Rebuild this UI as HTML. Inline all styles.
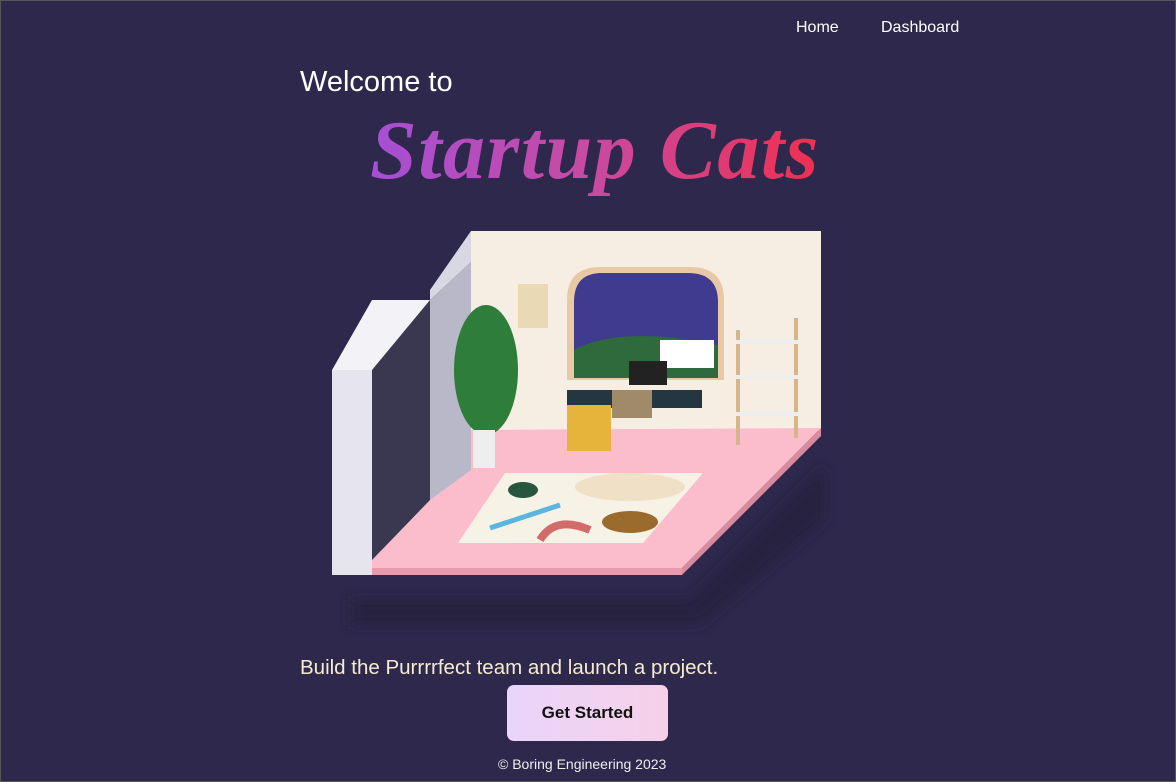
<!DOCTYPE html>
<html><head><style>
html,body{margin:0;padding:0}
body{width:1176px;height:782px;background:#2e284c;font-family:"Liberation Sans",sans-serif;position:relative;overflow:hidden;box-shadow:inset 0 0 0 1px #555}
.nav{position:absolute;top:19px;font-size:16px;color:#fff}
.w{position:absolute;left:300px;top:66px;font-size:29px;color:#fff}
.logo{position:absolute;left:370px;top:102px;font-family:"Liberation Serif",serif;font-style:italic;font-size:84px;font-weight:bold;background:linear-gradient(90deg,#a64fd6,#c94aa0 50%,#ef2f4f);-webkit-background-clip:text;background-clip:text;color:transparent;letter-spacing:1.5px}
.tag{position:absolute;left:300px;top:656px;font-size:20.5px;color:#f6eccf}
.btn{position:absolute;left:507px;top:685px;width:161px;height:56px;border-radius:7px;background:linear-gradient(90deg,#ead5fb,#f6d0e8);color:#111;font-size:17px;font-weight:bold;text-align:center;line-height:56px}
.ft{position:absolute;left:498px;top:756px;font-size:14px;color:#eee}
</style></head><body>
<div class="nav" style="left:796px">Home</div>
<div class="nav" style="left:881px">Dashboard</div>
<div class="w">Welcome to</div>
<div class="logo">Startup Cats</div>
<svg style="position:absolute;left:0;top:0" width="1176" height="782">
<defs><filter id="b"><feGaussianBlur stdDeviation="6"/></filter></defs>
<polygon points="350,600 690,600 825,465 825,520 700,625 350,625" fill="#272040" filter="url(#b)"/>
<rect x="471" y="231" width="350" height="200" fill="#f6ede3"/>
<polygon points="471,430 821,428 682,568 332,568" fill="#fbbccb"/>
<polygon points="332,568 682,568 682,575 332,575" fill="#e79aac"/>
<polygon points="682,568 821,428 821,436 682,575" fill="#d98a9c"/>
<polygon points="430,300 471,262 471,470 430,500" fill="#b9b8c8"/>
<polygon points="372,300 430,300 430,500 372,560" fill="#3a3850"/>
<polygon points="332,370 372,300 430,300 372,370" fill="#f3f2f7"/>
<rect x="332" y="370" width="40" height="205" fill="#e6e4ec"/>
<polygon points="430,300 471,262 471,231 430,290" fill="#d8d8e4"/>
<path d="M567,380 V300 Q567,267 600,267 H690 Q724,267 724,300 V380 Z" fill="#e9c8a6"/>
<path d="M574,378 V302 Q574,273 602,273 H688 Q718,273 718,302 V378 Z" fill="#3f3b8e"/>
<path d="M574,378 L574,350 Q620,325 718,345 V378 Z" fill="#2f6a3c"/>
<rect x="660" y="340" width="54" height="28" fill="#fff"/>
<rect x="518" y="284" width="30" height="44" fill="#e9d9b5"/>
<rect x="567" y="390" width="135" height="18" fill="#243642"/>
<rect x="567" y="405" width="44" height="46" fill="#e6b43a"/>
<rect x="629" y="361" width="38" height="24" fill="#222"/>
<rect x="612" y="390" width="40" height="28" fill="#a08a6a"/>
<rect x="736" y="330" width="4" height="115" fill="#d4b68a"/><rect x="794" y="318" width="4" height="120" fill="#d4b68a"/>
<rect x="736" y="340" width="62" height="4" fill="#eee"/><rect x="736" y="375" width="62" height="4" fill="#eee"/><rect x="736" y="412" width="62" height="4" fill="#eee"/>
<ellipse cx="486" cy="370" rx="32" ry="65" fill="#2f7d3a"/>
<rect x="473" y="430" width="22" height="38" fill="#eee"/>
<polygon points="505,473 703,473 643,543 458,543" fill="#f7f2e6"/>
<ellipse cx="630" cy="487" rx="55" ry="14" fill="#f0e0c5"/>
<ellipse cx="630" cy="522" rx="28" ry="11" fill="#9a6b2d"/>
<ellipse cx="523" cy="490" rx="15" ry="8" fill="#28553d"/>
<path d="M540,540 Q555,515 590,530" stroke="#d46b6b" stroke-width="8" fill="none"/>
<path d="M490,528 L560,505" stroke="#5cb5dc" stroke-width="5"/>
</svg>
<div class="tag">Build the Purrrrfect team and launch a project.</div>
<div class="btn">Get Started</div>
<div class="ft">© Boring Engineering 2023</div>
</body></html>
